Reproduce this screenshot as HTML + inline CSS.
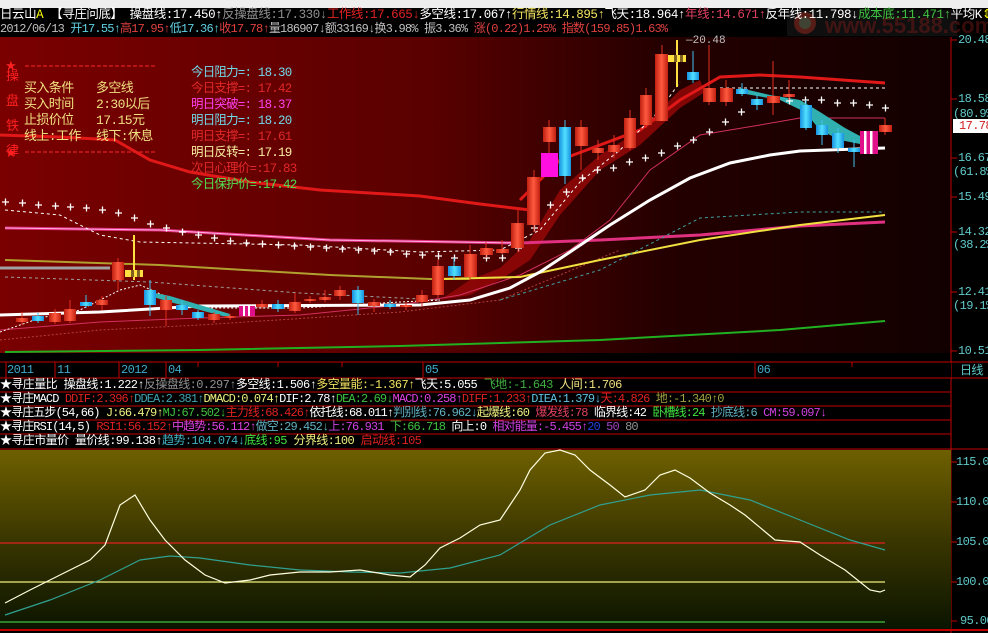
<!DOCTYPE html>
<html><head><meta charset="utf-8">
<style>
html,body{margin:0;padding:0;background:#000;width:988px;height:633px;overflow:hidden}
.t{position:absolute;white-space:nowrap;font-family:"Liberation Mono","Noto Sans CJK SC",monospace;font-size:12px;letter-spacing:-0.6px;line-height:14px}
</style></head><body>
<svg width="988" height="633" style="position:absolute;left:0;top:0" xmlns="http://www.w3.org/2000/svg">
<defs>
<linearGradient id="bg" x1="0" x2="1" y1="0" y2="0">
<stop offset="0" stop-color="#7a0000"/><stop offset="0.45" stop-color="#5a0000"/><stop offset="0.7" stop-color="#240000"/><stop offset="1" stop-color="#120000"/></linearGradient>
<linearGradient id="ol" x1="0" x2="0" y1="0" y2="1">
<stop offset="0" stop-color="#6e6000"/><stop offset="0.5" stop-color="#3a3600"/><stop offset="1" stop-color="#0a1400"/></linearGradient>
<linearGradient id="rc" x1="0" x2="1"><stop offset="0" stop-color="#c02010"/><stop offset="0.5" stop-color="#ff5a40"/><stop offset="1" stop-color="#c02010"/></linearGradient>
<linearGradient id="bc" x1="0" x2="1"><stop offset="0" stop-color="#1890e0"/><stop offset="0.5" stop-color="#50e0ff"/><stop offset="1" stop-color="#1890e0"/></linearGradient>
</defs>
<rect x="0" y="0" width="988" height="8" fill="#eeeeee"/>
<rect x="0" y="8" width="988" height="29" fill="#000"/>
<rect x="0" y="37" width="951" height="316" fill="url(#bg)"/>
<rect x="0" y="353" width="951" height="9" fill="#000"/>
<line x1="951" y1="37" x2="951" y2="633" stroke="#c00000"/>
<rect x="787" y="10" width="170" height="26" fill="#2a2a2a" opacity="0.35"/>
<text x="825" y="33" font-family="Liberation Sans" font-weight="bold" font-size="22" fill="#a02020" opacity="0.35">www.55188.com</text>
<circle cx="805" cy="23" r="11" fill="#c03020" opacity="0.4"/><circle cx="805" cy="23" r="6" fill="#208060" opacity="0.4"/>
<polygon points="440,300 470,280 500,268 530,240 560,190 600,155 640,130 680,90 700,80 705,92 680,108 640,145 600,170 560,215 530,260 500,280 470,295" fill="#9a0808" opacity="0.8"/>
<polyline points="0,135 60,137 115,140 150,160 190,172 250,182 320,190 420,196 480,204 530,210" fill="none" stroke="#e01818" stroke-width="3"/>
<polyline points="520,200 560,160 600,145 640,130 680,100 720,77 760,75 800,77 885,83" fill="none" stroke="#e01818" stroke-width="3"/>
<polyline points="0,330 100,322 200,318 300,315 400,305 460,295 520,275 570,250 610,220 650,170 700,135 760,125 800,118 885,118" fill="none" stroke="#d03060" stroke-width="1"/>
<polyline points="0,340 100,330 200,325 400,312 500,300 560,275 620,250" fill="none" stroke="#b04040" stroke-width="1" stroke-dasharray="2,2"/>
<polyline points="5,228 160,230 330,240 520,243 600,240 700,235 800,226 885,222" fill="none" stroke="#e03080" stroke-width="3"/>
<polyline points="5,228 160,230 330,240 520,243" fill="none" stroke="#ffb0e0" stroke-width="1"/>
<polyline points="5,260 160,265 330,275 430,279 470,279" fill="none" stroke="#b0a030" stroke-width="2"/>
<line x1="0" y1="268" x2="110" y2="268" stroke="#a0a0a0" stroke-width="3"/>
<polyline points="5,277 150,282 300,293 440,300" fill="none" stroke="#a0a0a0" stroke-width="1" stroke-dasharray="3,3"/>
<polyline points="440,279 520,277 600,260 700,240 800,225 885,215" fill="none" stroke="#f0e040" stroke-width="2"/>
<polyline points="500,300 600,270 700,218 800,212 885,212" fill="none" stroke="#40a0a0" stroke-width="1" stroke-dasharray="3,3"/>
<polyline points="0,315 100,312 200,306 420,305 470,300 510,288 540,272 570,252 610,225 650,200 690,178 730,163 770,155 800,151 885,148" fill="none" stroke="#ffffff" stroke-width="3"/>
<polyline points="5,352 200,350 400,346 600,340 780,330 885,321" fill="none" stroke="#20b020" stroke-width="2"/>
<polyline points="5,210 60,215 100,235 140,242 300,245 420,252 500,250 540,230 580,182 620,150 660,110 680,82" fill="none" stroke="#ffffff" stroke-width="1" stroke-dasharray="3,3"/>
<line x1="720" y1="88" x2="885" y2="88" stroke="#fff" stroke-dasharray="3,3"/>
<polyline points="0,332 40,318 80,310 120,290 140,285 165,296 200,308 300,308 400,302 440,300" fill="none" stroke="#fff" stroke-width="1" stroke-dasharray="2,2"/>
<polygon points="150,292 170,296 200,305 230,314 230,318 200,310 170,302 150,296" fill="#30b0b0"/>
<polygon points="740,88 770,95 800,100 820,112 845,128 860,136 860,144 840,140 820,130 805,112 780,100 740,93" fill="#30b0b0"/>
<g stroke="#fff" stroke-width="1.3">
<path d="M2,202h7M5.5,198.5v7 M19,203h7M22.5,199.5v7 M35,205h7M38.5,201.5v7 M52,206h7M55.5,202.5v7 M67,207h7M70.5,203.5v7 M83,208h7M86.5,204.5v7 M99,210h7M102.5,206.5v7 M115,213h7M118.5,209.5v7 M131,218h7M134.5,214.5v7 M147,224h7M150.5,220.5v7 M163,228h7M166.5,224.5v7 M179,232h7M182.5,228.5v7 M195,235h7M198.5,231.5v7 M211,238h7M214.5,234.5v7 M227,241h7M230.5,237.5v7 M243,243h7M246.5,239.5v7 M259,244h7M262.5,240.5v7 M275,245h7M278.5,241.5v7 M291,246h7M294.5,242.5v7 M307,247h7M310.5,243.5v7 M323,248h7M326.5,244.5v7 M339,249h7M342.5,245.5v7 M355,250h7M358.5,246.5v7 M371,251h7M374.5,247.5v7 M387,252h7M390.5,248.5v7 M403,254h7M406.5,250.5v7 M419,255h7M422.5,251.5v7 M435,256h7M438.5,252.5v7 M451,258h7M454.5,254.5v7 M467,258h7M470.5,254.5v7 M483,258h7M486.5,254.5v7 M499,258h7M502.5,254.5v7 M515,248h7M518.5,244.5v7 M531,228h7M534.5,224.5v7 M547,205h7M550.5,201.5v7 M563,192h7M566.5,188.5v7 M579,178h7M582.5,174.5v7 M594,170h7M597.5,166.5v7 M610,168h7M613.5,164.5v7 M626,162h7M629.5,158.5v7 M642,158h7M645.5,154.5v7 M658,153h7M661.5,149.5v7 M674,146h7M677.5,142.5v7 M690,140h7M693.5,136.5v7 M706,132h7M709.5,128.5v7 M722,122h7M725.5,118.5v7 M738,112h7M741.5,108.5v7 M786,101h7M789.5,97.5v7 M802,100h7M805.5,96.5v7 M818,100h7M821.5,96.5v7 M834,103h7M837.5,99.5v7 M850,103h7M853.5,99.5v7 M866,105h7M869.5,101.5v7 M882,108h7M885.5,104.5v7"/>
</g>
<g stroke="#e03020" stroke-width="1">
<path d="M22,312V325M55,309V324M70,300V323M102,296V310M118,258V290M166,296V326M214,312V323M230,314V320M262,300V309M295,293V313M310,296V303M325,290V302M340,286V300M374,299V312M406,302V310M422,290V306M438,260V298M470,245V280M486,242V258M502,240V254M518,210V252M534,170V232M549,120V153M581,120V170M598,140V160M614,135V158M630,110V150M646,88V128M662,45V121M709,45V105M726,80V106M773,61V115M789,80V100M885,118V135"/>
</g>
<g fill="url(#rc)">
<rect x="16" y="318" width="12" height="4"/><rect x="49" y="313" width="12" height="9"/><rect x="64" y="309" width="12" height="12"/><rect x="96" y="300" width="12" height="5"/><rect x="112" y="262" width="12" height="18"/><rect x="160" y="300" width="12" height="10"/><rect x="208" y="314" width="12" height="6"/><rect x="224" y="316" width="12" height="2"/><rect x="256" y="304" width="12" height="3"/><rect x="289" y="302" width="12" height="9"/><rect x="304" y="299" width="12" height="2"/><rect x="319" y="297" width="12" height="3"/><rect x="334" y="290" width="12" height="6"/><rect x="368" y="302" width="12" height="4"/><rect x="400" y="305" width="12" height="2"/><rect x="416" y="295" width="12" height="7"/><rect x="432" y="266" width="12" height="29"/><rect x="464" y="254" width="13" height="23"/><rect x="480" y="248" width="13" height="7"/><rect x="496" y="249" width="13" height="4"/><rect x="511" y="223" width="13" height="25"/><rect x="527" y="177" width="13" height="48"/><rect x="543" y="127" width="13" height="15"/><rect x="575" y="127" width="13" height="19"/><rect x="592" y="148" width="12" height="5"/><rect x="608" y="145" width="12" height="7"/><rect x="624" y="118" width="12" height="30"/><rect x="640" y="95" width="12" height="30"/><rect x="655" y="54" width="13" height="67"/><rect x="703" y="88" width="13" height="14"/><rect x="720" y="88" width="13" height="14"/><rect x="767" y="96" width="13" height="7"/><rect x="783" y="94" width="12" height="3"/><rect x="879" y="125" width="13" height="7"/>
</g>
<g stroke="#40c0f0"><path d="M38,313V323M86,295V308M150,280V316M182,300V315M198,310V320M278,300V312M358,286V315M390,300V309M454,258V280M565,120V184M693,51V83M742,83V96M757,95V110M806,100V130M822,120V145M838,128V153M854,140V167"/></g>
<g fill="url(#bc)">
<rect x="32" y="316" width="12" height="5"/><rect x="80" y="302" width="12" height="4"/><rect x="144" y="290" width="12" height="15"/><rect x="176" y="305" width="12" height="5"/><rect x="192" y="312" width="12" height="6"/><rect x="272" y="304" width="12" height="5"/><rect x="352" y="290" width="12" height="13"/><rect x="384" y="304" width="12" height="3"/><rect x="448" y="266" width="13" height="10"/><rect x="559" y="127" width="12" height="49"/><rect x="687" y="72" width="12" height="8"/><rect x="736" y="89" width="12" height="5"/><rect x="751" y="99" width="12" height="6"/><rect x="800" y="105" width="12" height="23"/><rect x="816" y="125" width="12" height="10"/><rect x="832" y="133" width="12" height="15"/><rect x="848" y="148" width="12" height="4"/>
</g>
<rect x="541" y="153" width="17" height="24" fill="#ff10e0"/>
<g><rect x="239" y="306" width="16" height="10" fill="#e0108a"/><rect x="243" y="306" width="2" height="10" fill="#fff"/><rect x="248" y="306" width="2" height="10" fill="#fff"/></g>
<g><rect x="860" y="131" width="18" height="23" fill="#e0108a"/><rect x="864" y="131" width="2.5" height="23" fill="#fff"/><rect x="870" y="131" width="2.5" height="23" fill="#fff"/></g>
<line x1="134" y1="235" x2="134" y2="280" stroke="#ffe040" stroke-width="2"/>
<rect x="125" y="270" width="18" height="7" fill="#ffe040"/><rect x="131" y="270" width="3" height="7" fill="#806020"/><rect x="137" y="270" width="3" height="7" fill="#806020"/>
<line x1="677" y1="40" x2="677" y2="87" stroke="#ffe040" stroke-width="2"/>
<rect x="668" y="55" width="18" height="7" fill="#ffe040"/><rect x="674" y="55" width="3" height="7" fill="#806020"/><rect x="680" y="55" width="3" height="7" fill="#806020"/>
<text x="686" y="43" font-family="Liberation Mono" font-size="11" fill="#c0c0c0">—20.48</text>
<line x1="25" y1="66" x2="155" y2="66" stroke="#e02020" stroke-dasharray="4,2" stroke-width="1.2"/>
<line x1="25" y1="152" x2="155" y2="152" stroke="#e02020" stroke-dasharray="4,2" stroke-width="1.2"/>
<text x="5" y="70" font-size="13" fill="#ff2020">★</text>
<text x="5" y="157" font-size="13" fill="#ff2020">★</text>
<g stroke="#c00000"><path d="M951,40h6M951,99h6M951,158h6M951,197h6M951,232h6M951,292h6M951,351h6M951,462h6M951,502h6M951,542h6M951,582h6M951,621h6"/></g>
<rect x="0" y="362" width="951" height="16" fill="#000"/>
<line x1="0" y1="362" x2="988" y2="362" stroke="#c00000"/>
<g stroke="#c00000"><path d="M6,362v16M55,362v16M119,362v16M166,362v16M198,362v5M278,362v5M342,362v5M423,362v16M755,362v16M852,362v5"/></g>
<g stroke="#c00000"><path d="M0,378H988M0,392H951M0,406H951M0,420H951M0,434H951M0,449H988"/></g>
<rect x="0" y="450" width="951" height="180" fill="url(#ol)"/>
<line x1="0" y1="630" x2="988" y2="630" stroke="#c00000" stroke-width="2"/>
<line x1="0" y1="543" x2="885" y2="543" stroke="#e02020" stroke-width="1.3"/>
<line x1="0" y1="582" x2="885" y2="582" stroke="#f0f080" stroke-width="1.3"/>
<line x1="0" y1="622" x2="885" y2="622" stroke="#40c040" stroke-width="1.3"/>
<polyline points="5,615 50,600 100,580 140,560 170,556 200,558 250,565 300,570 350,572 400,573 450,568 500,555 550,525 600,505 650,495 700,490 750,500 800,520 850,540 885,550" fill="none" stroke="#30a090" stroke-width="1.2"/>
<polyline points="5,603 30,590 60,575 90,560 105,545 120,505 135,495 150,520 165,540 185,560 205,575 225,583 250,580 270,575 300,572 330,572 360,570 390,575 410,577 425,565 440,548 460,538 480,525 500,520 520,490 530,470 545,453 560,450 575,455 590,470 610,485 625,497 645,490 660,475 675,470 690,478 710,493 730,505 745,515 775,540 800,542 820,555 845,570 860,582 870,590 880,592 885,590" fill="none" stroke="#ffffe0" stroke-width="1.2"/>
</svg>

<div class="t" style="left:0;top:8px;color:#fff;font-size:12.5px;letter-spacing:-0.45px"><span>日云山</span><span style="color:#ffff00">A</span> 【寻庄问底】 操盘线:17.450↑<span style="color:#909090">反操盘线:17.330↓</span><span style="color:#e02020">工作线:17.665↓</span>多空线:17.067↑<span style="color:#f0e060">行情线:14.895↑</span>飞天:18.964↑<span style="color:#e04060">年线:14.671↑</span>反年线:11.798↓<span style="color:#40c040">成本底:11.471↑</span>平均K<span style="color:#ffff00">⇕</span></div>
<div class="t" style="left:0;top:22px;color:#c0c0c0;letter-spacing:-0.8px"><span>2012/06/13 </span><span style="color:#60d0e0">开17.55↑</span><span style="color:#e04040">高17.95↑</span><span style="color:#60d0e0">低17.36↑</span><span style="color:#e04040">收17.78↑</span>量186907↓额33169↓换3.98% 振3.36% <span style="color:#e04040">涨(0.22)1.25% 指数(159.85)1.63%</span></div>

<div class="t" style="left:6px;top:64px;color:#ff2020;font-size:13px;line-height:25px;width:14px;white-space:normal;letter-spacing:0">操<br>盘<br>铁<br>律</div>
<div class="t" style="left:24px;top:81px;color:#f0e080;line-height:16px;font-size:13px">买入条件<br>买入时间<br>止损价位<br>线上:工作</div>
<div class="t" style="left:96px;top:81px;color:#f0e080;line-height:16px;font-size:13px">多空线<br>2:30以后<br>17.15元<br>线下:休息</div>
<div class="t" style="left:191px;top:65px;line-height:16px;font-size:12.5px;letter-spacing:-0.8px">
<span style="color:#70d8e8">今日阻力=: 18.30</span><br><span style="color:#e02828">今日支撑=: 17.42</span><br><span style="color:#ff40f0">明日突破=: 18.37</span><br><span style="color:#70d8e8">明日阻力=: 18.20</span><br><span style="color:#e02828">明日支撑=: 17.61</span><br><span style="color:#f8f0a0">明日反转=: 17.19</span><br><span style="color:#e02828">次日心理价=:17.83</span><br><span style="color:#50e050">今日保护价=:17.42</span></div>

<div class="t" style="left:958px;top:33px;color:#60c8c8">20.48</div>
<div class="t" style="left:958px;top:92px;color:#60c8c8">18.58</div>
<div class="t" style="left:953px;top:107px;color:#60c8c8">(80.9%)</div>
<div style="position:absolute;left:953px;top:119px;width:35px;height:14px;background:#fff"></div>
<div class="t" style="left:959px;top:119px;color:#d02020">17.78</div>
<div class="t" style="left:958px;top:151px;color:#60c8c8">16.67</div>
<div class="t" style="left:953px;top:165px;color:#60c8c8">(61.8%)</div>
<div class="t" style="left:958px;top:190px;color:#60c8c8">15.49</div>
<div class="t" style="left:958px;top:225px;color:#60c8c8">14.32</div>
<div class="t" style="left:953px;top:238px;color:#60c8c8">(38.2%)</div>
<div class="t" style="left:958px;top:285px;color:#60c8c8">12.41</div>
<div class="t" style="left:953px;top:299px;color:#60c8c8">(19.1%)</div>
<div class="t" style="left:958px;top:344px;color:#60c8c8">10.51</div>
<div class="t" style="left:960px;top:364px;color:#60c8c8">日线</div>
<div class="t" style="left:956px;top:455px;color:#60c8c8">115.00</div>
<div class="t" style="left:956px;top:495px;color:#60c8c8">110.00</div>
<div class="t" style="left:956px;top:535px;color:#60c8c8">105.00</div>
<div class="t" style="left:956px;top:575px;color:#60c8c8">100.00</div>
<div class="t" style="left:960px;top:614px;color:#60c8c8">95.00</div>

<div class="t" style="left:7px;top:363px;color:#40a8c8">2011</div>
<div class="t" style="left:57px;top:363px;color:#40a8c8">11</div>
<div class="t" style="left:121px;top:363px;color:#40a8c8">2012</div>
<div class="t" style="left:168px;top:363px;color:#40a8c8">04</div>
<div class="t" style="left:425px;top:363px;color:#40a8c8">05</div>
<div class="t" style="left:757px;top:363px;color:#40a8c8">06</div>

<div class="t" style="left:0;top:378px;color:#fff">★寻庄量比 操盘线:1.222↑<span style="color:#909090">反操盘线:0.297↑</span>多空线:1.506↑<span style="color:#f0e060">多空量能:-1.367↑</span>飞天:5.055 <span style="color:#40b040">飞地:-1.643</span> <span style="color:#f0e080">人间:1.706</span></div>
<div class="t" style="left:0;top:392px;color:#fff;letter-spacing:-0.9px">★寻庄MACD <span style="color:#e02020">DDIF:2.396↑</span><span style="color:#40a0b0">DDEA:2.381↑</span><span style="color:#f0f080">DMACD:0.074↑</span>DIF:2.78↑<span style="color:#40c040">DEA:2.69↓</span><span style="color:#e040e0">MACD:0.258↑</span><span style="color:#e02020">DIFF:1.233↑</span><span style="color:#60c0e0">DIEA:1.379↓</span><span style="color:#e02020">天:4.826</span> <span style="color:#a0a040">地:-1.340↑0</span></div>
<div class="t" style="left:0;top:406px;color:#fff;letter-spacing:-0.9px">★寻庄五步(54,66) <span style="color:#f0f080">J:66.479↑</span><span style="color:#40c040">MJ:67.502↓</span><span style="color:#e02020">主力线:68.426↑</span>依托线:68.011↑<span style="color:#60b0c0">判别线:76.962↓</span><span style="color:#f0f080">起爆线:60</span> <span style="color:#e04060">爆发线:78</span> 临界线:42 <span style="color:#40e040">卧槽线:24</span> <span style="color:#60b0c0">抄底线:6</span> <span style="color:#d040e0">CM:59.097↓</span></div>
<div class="t" style="left:0;top:420px;color:#fff;letter-spacing:-0.9px">★寻庄RSI(14,5) <span style="color:#e02020">RSI1:56.152↑</span><span style="color:#e040e0">中趋势:56.112↑</span><span style="color:#60b0c0">做空:29.452↓</span><span style="color:#d040e0">上:76.931</span> <span style="color:#40c040">下:66.718</span> 向上:0 <span style="color:#d040e0">相对能量:-5.455↑</span><span style="color:#2040e0">20</span> <span style="color:#a040c0">50</span> <span style="color:#909090">80</span></div>
<div class="t" style="left:0;top:434px;color:#fff">★寻庄市量价 量价线:99.138↑<span style="color:#40b0c0">趋势:104.074↓</span><span style="color:#40e040">底线:95</span> <span style="color:#f0f080">分界线:100</span> <span style="color:#e02020">启动线:105</span></div>
</body></html>
